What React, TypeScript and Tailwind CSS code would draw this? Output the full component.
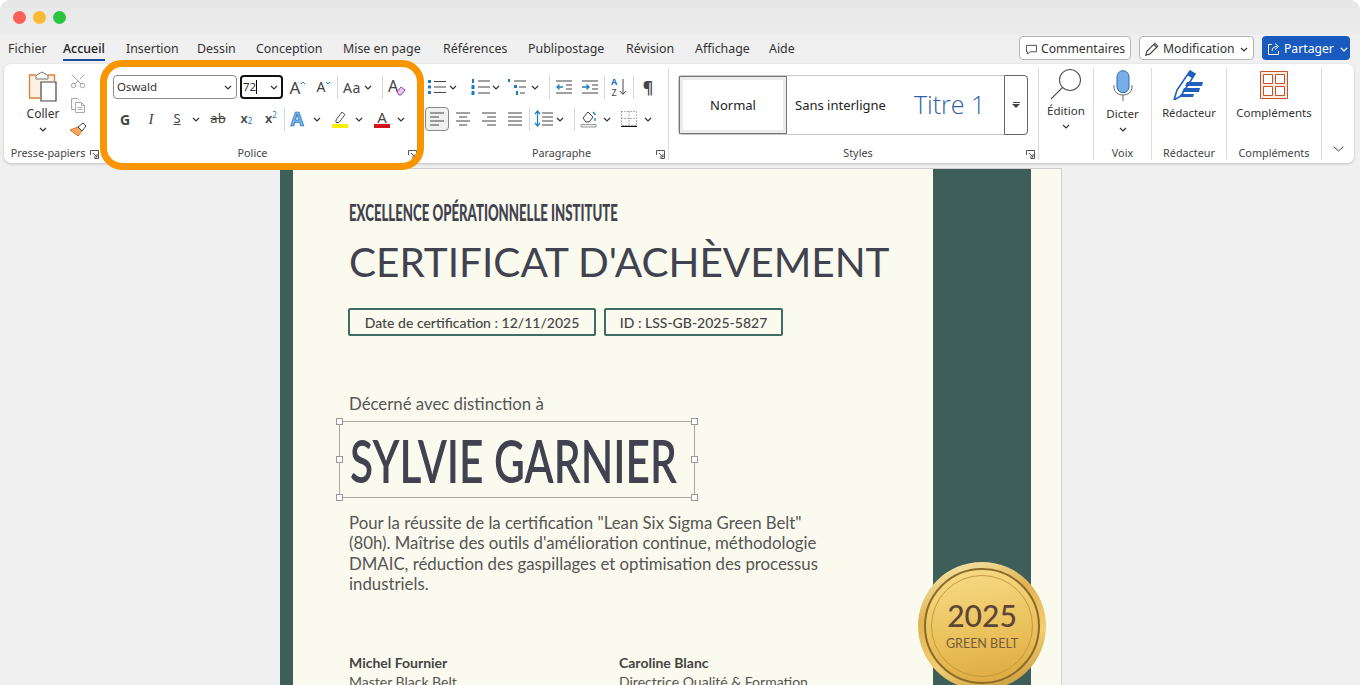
import React from "react";
import { Scissors } from "lucide-react";

const Chev = ({ c = "#333", w = 8 }: { c?: string; w?: number }) => (
  <svg width={w} height={5} viewBox="0 0 8 5" className="shrink-0" fill="none">
    <path d="M1 1l3 3 3-3" stroke={c} strokeWidth="1.2" />
  </svg>
);
const Cell = ({ className = "", children }: { className?: string; children?: React.ReactNode }) => (
  <div className={"flex h-6 shrink-0 items-center justify-center text-[#444] " + className}>{children}</div>
);
const Sep = ({ className = "" }: { className?: string }) => <div className={"h-6 w-px shrink-0 bg-[#d8d8d8] " + className} />;
const Launcher = () => (
  <svg width="9" height="9" viewBox="0 0 9 9" fill="none" className="absolute bottom-[1px] right-[3px]">
    <path d="M.5 5V.5H8.5V8.5H4.5M3 3l4 4M7 4v3H4" stroke="#555" strokeWidth="1" />
  </svg>
);
const Group = ({ label, className = "", labelClass = "", launcher, children }: { label: string; className?: string; labelClass?: string; launcher?: boolean; children?: React.ReactNode }) => (
  <div className={"relative flex h-[92px] shrink-0 flex-col " + className}>
    <div className="min-h-0 flex-1">{children}</div>
    <div className={"text-center text-[10.8px] leading-[14px] text-[#444] " + labelClass}>{label}</div>
    {launcher && <Launcher />}
  </div>
);
const AlignL = () => (
  <svg width="20" height="16" viewBox="0 0 20 16" fill="none" stroke="#444" strokeWidth="1.1"><path d="M3 2h14M3 6h9M3 10h14M3 14h9" /></svg>
);
const AlignC = () => (
  <svg width="20" height="16" viewBox="0 0 20 16" fill="none" stroke="#444" strokeWidth="1.1"><path d="M3 2h14M6 6h8M3 10h14M6 14h8" /></svg>
);
const AlignR = () => (
  <svg width="20" height="16" viewBox="0 0 20 16" fill="none" stroke="#444" strokeWidth="1.1"><path d="M3 2h14M8 6h9M3 10h14M8 14h9" /></svg>
);
const AlignJ = () => (
  <svg width="20" height="16" viewBox="0 0 20 16" fill="none" stroke="#444" strokeWidth="1.1"><path d="M3 2h14M3 6h14M3 10h14M3 14h14" /></svg>
);

const Handle = ({ className }: { className: string }) => (
  <div className={"absolute h-[7px] w-[7px] border border-[#999] bg-white " + className} />
);

const tabs = [
  ["Fichier", "w-[55px]"],
  ["Accueil", "w-[63px]"],
  ["Insertion", "w-[71px]"],
  ["Dessin", "w-[59px]"],
  ["Conception", "w-[87px]"],
  ["Mise en page", "w-[100px]"],
  ["Références", "w-[85px]"],
  ["Publipostage", "w-[98px]"],
  ["Révision", "w-[69px]"],
  ["Affichage", "w-[74px]"],
  ["Aide", "w-[40px]"],
];

export default function App() {
  return (
    <div className="h-[685px] w-[1360px] overflow-hidden bg-white font-['Noto_Sans',sans-serif]">
      <div className="relative flex h-[685px] flex-col overflow-hidden rounded-t-[10px] bg-[#f0f0f0]">
        {/* title bar */}
        <div className="flex h-[35px] shrink-0 items-center gap-[7px] bg-[linear-gradient(#e7e7e7,#ececec)] pb-[1px] pl-[13px]">
          <div className="h-[13px] w-[13px] rounded-full bg-[#fb5f57]" />
          <div className="h-[13px] w-[13px] rounded-full bg-[#fbb934]" />
          <div className="h-[13px] w-[13px] rounded-full bg-[#2bc640]" />
        </div>
        {/* menu row */}
        <div className="flex h-[29px] shrink-0 items-start justify-between pl-2 pr-[10px]">
          <div className="flex text-[12.4px] leading-[28px] text-[#333]">
            {tabs.map(([t, w]) => (
              <div key={t} className={w}>
                <span className={t === "Accueil" ? "inline-block h-[26px] border-b-2 border-[#1e4e9e] font-medium text-[#222]" : ""}>{t}</span>
              </div>
            ))}
          </div>
          <div className="flex items-center gap-2 pt-[1px] text-[12.2px] text-[#333]">
            <div className="flex h-6 w-[112px] items-center gap-1 rounded-[4px] border border-[#b5b5b5] bg-white pl-[6px] pt-[2px]">
              <svg width="11" height="11" viewBox="0 0 12 12" fill="none" stroke="#444"><path d="M.5 1.5h11v7h-7l-3 2.5v-2.5h-1z" /></svg>
              Commentaires
            </div>
            <div className="flex h-6 w-[115px] items-center gap-[3px] rounded-[4px] border border-[#b5b5b5] bg-white pl-[4px] pt-[2px]">
              <svg width="16" height="16" viewBox="0 0 14 14" fill="none" stroke="#444"><path d="M1.5 12.5l1-3.5 7-7 2.5 2.5-7 7zM8.5 3l2.5 2.5" /></svg>
              Modification
              <span className="ml-[2px]"><Chev /></span>
            </div>
            <div className="flex h-6 w-[88px] items-center gap-[3px] rounded-[4px] bg-[#185abd] pl-[5px] pt-[2px] text-white">
              <svg width="14" height="14" viewBox="0 0 14 14" fill="none" stroke="#fff"><path d="M5 2.5H1.5v10h10V9M5 9c0-3 2-4.5 5-4.5M8 1.5l3.5 3L8 7.5" /></svg>
              Partager
              <span className="ml-[3px]"><Chev c="#fff" /></span>
            </div>
          </div>
        </div>
        {/* ribbon */}
        <div className="relative z-10 mx-1 flex h-[99px] w-[1350px] shrink-0 items-start rounded-[7px] bg-white pt-1 shadow-[0_1px_3px_rgba(0,0,0,0.2)]">
          {/* Presse-papiers */}
          <Group label="Presse-papiers" labelClass="pr-[10px]" launcher className="w-[98px]">
            <div className="flex pl-4">
              <div className="flex w-[46px] flex-col items-center pt-[3px]">
                <svg width="30" height="31" viewBox="0 0 30 31" fill="none">
                  <path d="M1.5 4h25v23h-25z" fill="#fdf1e2" stroke="none" />
                  <path d="M8 4.5L14 1l6 3.5V8H8z" fill="#fff" stroke="#777" />
                  <path d="M13 11h15v19H13z" fill="#fff" stroke="#444" strokeWidth="1.2" />
                  <path d="M8 4H1.5v23H13M20 4h6.5v7" stroke="#d9843a" strokeWidth="1.4" />
                </svg>
                <div className="mt-[3px] text-[12px] leading-[18px] text-[#333]">Coller</div>
                <div className="mt-[4px]"><Chev /></div>
              </div>
              <div className="flex w-6 flex-col items-center">
                <div className="flex h-[25px] items-center"><Scissors size={18} className="-rotate-90 text-[#a5a5a5]" strokeWidth={1.3} /></div>
                <div className="flex h-[25px] items-center">
                  <svg width="17" height="17" viewBox="0 0 17 17" fill="none" stroke="#aaa"><path d="M1.5 1.5h6l2 2M1.5 1.5v11H5M5.5 5.5h6l3 3v7h-9zM11.5 5.5v3h3M7.5 10.5h5M7.5 12.5h5" /></svg>
                </div>
                <div className="flex h-[25px] items-center">
                  <svg width="18" height="17" viewBox="0 0 18 17" fill="none">
                    <path d="M9 5l4 4-4 5L1 8z" fill="#f0a860" stroke="#d9762a" />
                    <path d="M9 5l5-4 3 3-4 5z" fill="#fff" stroke="#444" />
                  </svg>
                </div>
              </div>
            </div>
          </Group>
          {/* Police */}
          <Group label="Police" labelClass="pr-7" launcher className="w-[318px] pl-[11px] pt-[7px]">
            <div className="flex items-center">
              <div className="flex h-6 w-[124px] items-center justify-between rounded-[4px] border border-[#8c8c8c] pl-[3px] pr-1 text-[11.5px] text-[#333]">
                Oswald <Chev />
              </div>
              <div className="ml-[3px] flex h-6 w-[43px] items-center justify-between rounded-[4px] border-2 border-[#111] pl-[1px] pr-[3px] text-[11.5px] text-[#333]">
                <span className="border-r border-black pr-0 leading-[14px]">72</span> <Chev />
              </div>
              <Cell className="ml-[3px] w-6">
                <span className="text-[17px] leading-none">A</span>
                <svg width="6" height="4" viewBox="0 0 6 4" className="mb-2" fill="none"><path d="M1 3l2-2 2 2" stroke="#1a7ebc" /></svg>
              </Cell>
              <Cell className="ml-[2px] w-6">
                <span className="text-[14px] leading-none">A</span>
                <svg width="6" height="4" viewBox="0 0 6 4" className="mb-2" fill="none"><path d="M1 1l2 2 2-2" stroke="#1a7ebc" /></svg>
              </Cell>
              <Sep className="ml-px" />
              <Cell className="ml-1 w-5 text-[14px] tracking-[0.5px]">Aa</Cell>
              <Cell className="ml-[2px] w-2"><Chev /></Cell>
              <Sep className="ml-[10px]" />
              <Cell className="ml-[2px] w-6">
                <span className="mb-[2px] text-[16px] leading-none">A</span>
                <svg width="10" height="10" viewBox="0 0 10 10" className="-ml-[2px] mt-2" fill="#e6c8ef" stroke="#a23fc0"><path d="M1 6l4-5 4 3-4 5H3z" /></svg>
              </Cell>
            </div>
            <div className="mt-2 flex items-center">
              <Cell className="-ml-px w-[26px] text-[14px] font-bold">G</Cell>
              <Cell className="w-[26px] font-['Liberation_Serif',serif] text-[15px] italic">I</Cell>
              <Cell className="w-[26px] text-[13px] underline">S</Cell>
              <Cell className="w-[11px]"><Chev /></Cell>
              <Cell className="w-[34px] text-[13px] line-through">ab</Cell>
              <Cell className="w-[23px] text-[13px] font-semibold">x<sub className="text-[8px] font-normal text-[#1a7ebc]">2</sub></Cell>
              <Cell className="w-[26px] text-[13px] font-semibold">x<sup className="text-[8px] font-normal text-[#1a7ebc]">2</sup></Cell>
              <Sep />
              <Cell className="w-6 text-[19px] font-bold text-[#1a78c8] [-webkit-text-stroke:0.6px_#0f5da3]"><span className="text-[#6fb4ee]">A</span></Cell>
              <Cell className="w-4"><Chev /></Cell>
              <Cell className="w-[30px]">
                <svg width="18" height="18" viewBox="0 0 18 18" fill="none">
                  <path d="M5 10l6-8 3 2.5-6 8H5z" stroke="#555" strokeWidth="1" />
                  <path d="M1 14h16v4H1z" fill="#f8f000" />
                </svg>
              </Cell>
              <Cell className="w-2"><Chev /></Cell>
              <Cell className="ml-[3px] w-8">
                <div className="flex flex-col items-center">
                  <span className="text-[15px] leading-[14px]">A</span>
                  <div className="h-[4px] w-[16px] bg-[#d3111a]" />
                </div>
              </Cell>
              <Cell className="w-[5px]"><Chev /></Cell>
            </div>
          </Group>
          {/* Paragraphe */}
          <Group label="Paragraphe" labelClass="pl-[30px]" launcher className="w-[249px] border-r border-[#dcdcdc] pl-[5px] pt-[7px]">
            <div className="flex items-center">
              <Cell className="w-6">
                <svg width="22" height="16" viewBox="0 0 22 16" fill="none" stroke="#444" strokeWidth="1.1"><path d="M8 2.5h12M8 8h12M8 13.5h12" /><path d="M2 1h3v3H2zM2 6.5h3v3H2zM2 12h3v3H2z" fill="#1a7ebc" stroke="none" /></svg>
              </Cell>
              <Cell className="w-2"><Chev /></Cell>
              <Cell className="ml-[11px] w-6">
                <svg width="22" height="18" viewBox="0 0 22 18" fill="none" stroke="#444" strokeWidth="1.1"><path d="M9 3h12M9 9h12M9 15h12" /><path d="M3 1h2v4H3zM2.5 7h3v4h-3zM2.5 13h3v4h-3z" fill="#1a7ebc" stroke="none" /></svg>
              </Cell>
              <Cell className="w-2"><Chev /></Cell>
              <Cell className="ml-[5px] w-6">
                <svg width="22" height="18" viewBox="0 0 22 18" fill="none" stroke="#444" strokeWidth="1.1"><path d="M8 3h12M13 9h7M14 15h5" /><path d="M2 1h2v3H2zM8 7h3v3H8zM10 13h2v4h-2z" fill="#1a7ebc" stroke="none" /></svg>
              </Cell>
              <Cell className="ml-[2px] w-2"><Chev /></Cell>
              <Sep className="ml-[10px]" />
              <Cell className="ml-[2px] w-6">
                <svg width="18" height="14" viewBox="0 0 18 14" fill="none" stroke="#444" strokeWidth="1.1"><path d="M1 1h16M11 5h6M11 9h6M1 13h16" /><path d="M8 7H2M4.5 4.5L2 7l2.5 2.5" stroke="#1a7ebc" strokeWidth="1.3" /></svg>
              </Cell>
              <Cell className="ml-[2px] w-6">
                <svg width="18" height="14" viewBox="0 0 18 14" fill="none" stroke="#444" strokeWidth="1.1"><path d="M1 1h16M11 5h6M11 9h6M1 13h16" /><path d="M1 7h7M5.5 4.5L8 7l-2.5 2.5" stroke="#1a7ebc" strokeWidth="1.3" /></svg>
              </Cell>
              <Sep className="ml-[2px]" />
              <Cell className="ml-[2px] w-6">
                <div className="flex h-[20px] flex-col items-center justify-between text-[9px] font-bold leading-[9px]"><span className="text-[#1a7ebc]">A</span><span className="font-normal">Z</span></div>
                <svg width="8" height="17" viewBox="0 0 8 17" fill="none" stroke="#444" className="ml-[2px]"><path d="M4 0v15M1 12l3 3.5L7 12" /></svg>
              </Cell>
              <Sep className="ml-[2px]" />
              <Cell className="ml-[2px] w-6 text-[16px] font-bold">¶</Cell>
            </div>
            <div className="mt-2 flex items-center">
              <Cell className="w-6 rounded-[4px] border border-[#8a8a8a] bg-[#f0f0f0]"><AlignL /></Cell>
              <Cell className="ml-[2px] w-6"><AlignC /></Cell>
              <Cell className="ml-[2px] w-6"><AlignR /></Cell>
              <Cell className="ml-[2px] w-6"><AlignJ /></Cell>
              <Sep className="ml-[2px]" />
              <Cell className="ml-[2px] w-6">
                <svg width="20" height="18" viewBox="0 0 20 18" fill="none" stroke="#444" strokeWidth="1.1"><path d="M8 3h11M8 7h11M8 11h11M8 15h11" /><path d="M3.5 1v15M1 4l2.5-3L6 4M1 13l2.5 3L6 13" stroke="#1a7ebc" strokeWidth="1.2" /></svg>
              </Cell>
              <Cell className="w-2"><Chev /></Cell>
              <Sep className="ml-[10px]" />
              <Cell className="ml-[2px] w-6">
                <svg width="18" height="18" viewBox="0 0 18 18" fill="none"><path d="M3 8l5-6 5 5-4 5H6z" stroke="#444" /><path d="M13 2l2.5 3M15 8v3" stroke="#1a7ebc" strokeWidth="1.3" /><path d="M1 14.5h15V17H1z" fill="#f0f0f0" stroke="#999" /></svg>
              </Cell>
              <Cell className="ml-[2px] w-2"><Chev /></Cell>
              <Cell className="ml-[6px] w-6">
                <svg width="16" height="16" viewBox="0 0 16 16" fill="none"><path d="M.5.5h15v14H.5zM8 .5v14M.5 7.5h15" stroke="#666" strokeDasharray="1 2" /><path d="M0 15.5h16" stroke="#111" strokeWidth="1.2" /></svg>
              </Cell>
              <Cell className="ml-[3px] w-2"><Chev /></Cell>
            </div>
          </Group>
          {/* Styles */}
          <Group label="Styles" launcher className="w-[370px] border-r border-[#dcdcdc] pl-[9px] pt-[7px]">
            <div className="flex h-[60px] w-[350px] rounded-[4px] border border-[#c8c8c8]">
              <div className="flex h-[58px] w-[108px] shrink-0 items-center justify-center border border-[#777] bg-white pt-[1px] text-[13px] text-[#222] shadow-[inset_0_0_0_3px_#ececec]">Normal</div>
              <div className="flex w-[127px] shrink-0 items-center pl-2 pt-[1px] text-[13px] text-[#222]">Sans interligne</div>
              <div className="flex flex-1 items-center font-['Open_Sans',sans-serif] text-[25px] font-light text-[#2f5fa8]">Titre 1</div>
              <div className="flex h-[60px] w-6 -translate-y-px translate-x-px flex-col items-center justify-center rounded-r-[4px] border border-[#666] bg-white">
                <div className="h-px w-[7px] bg-[#444]" />
                <svg width="8" height="5" viewBox="0 0 8 5" className="mt-px"><path d="M0 0h8L4 4z" fill="#444" /></svg>
              </div>
            </div>
          </Group>
          {/* Édition */}
          <Group label="" className="w-[55px] border-r border-[#dcdcdc]">
            <div className="flex flex-col items-center pt-[1px]">
              <svg width="34" height="31" viewBox="0 0 34 31" fill="none" stroke="#555" strokeWidth="1.1"><circle cx="21" cy="11" r="10.5" fill="#fff" /><path d="M13.5 18.5L2 30" /></svg>
              <div className="mt-[2px] text-[11.6px] leading-[18px] text-[#333]">Édition</div>
              <div className="mt-[4px]"><Chev /></div>
            </div>
          </Group>
          {/* Voix */}
          <Group label="Voix" className="w-[58px] border-r border-[#dcdcdc]">
            <div className="flex flex-col items-center pt-[2px]">
              <svg width="20" height="31" viewBox="0 0 20 31" fill="none">
                <rect x="4" y=".7" width="12" height="22" rx="6" fill="#77aee5" stroke="#2b6cb5" />
                <path d="M1 15v2c0 5 4 8 9 8s9-3 9-8v-2M10 25v6" stroke="#666" />
              </svg>
              <div className="mt-[4px] text-[11.6px] leading-[18px] text-[#333]">Dicter</div>
              <div className="mt-[4px]"><Chev /></div>
            </div>
          </Group>
          {/* Rédacteur */}
          <Group label="Rédacteur" className="w-[75px] border-r border-[#dcdcdc]">
            <div className="flex flex-col items-center pt-[2px]">
              <svg width="32" height="30" viewBox="0 0 32 30" fill="none">
                <path d="M1 30L4 20 17 1l5 3L8 26z" fill="#fff" stroke="#1f5fbd" strokeWidth="1.6" />
                <path d="M14 12h16l-1 4H12zM11 18h16l-1 4H9zM8 24h13l-1 3H6z" fill="#1f5fbd" />
                <path d="M17 1l5 3-3 4-5-3z" fill="#1f5fbd" />
              </svg>
              <div className="mt-[4px] text-[11.2px] leading-[18px] text-[#333]">Rédacteur</div>
            </div>
          </Group>
          {/* Compléments */}
          <Group label="Compléments" className="w-[95px] border-r border-[#dcdcdc]">
            <div className="flex flex-col items-center pt-[3px]">
              <svg width="28" height="28" viewBox="0 0 28 28" fill="none">
                <path d="M.5.5h27v27H.5z" fill="#fdeee2" stroke="#c8502a" />
                <path d="M3.5 3.5h9v9h-9zM15.5 3.5h9v9h-9zM3.5 15.5h9v9h-9zM15.5 15.5h9v9h-9z" fill="#fff" stroke="#c8502a" />
              </svg>
              <div className="mt-[5px] text-[11.5px] leading-[18px] text-[#333]">Compléments</div>
            </div>
          </Group>
          <div className="flex h-[90px] flex-1 items-end justify-center pb-[6px]">
            <svg width="11" height="6" viewBox="0 0 11 6" fill="none"><path d="M.7.7l4.8 4.3L10.3.7" stroke="#444" /></svg>
          </div>
        </div>
        {/* document area */}
        <div className="flex min-h-0 flex-1 pl-[280px] pt-[5px]">
          <div className="relative flex h-[600px] w-[782px] shrink-0 border-y border-r border-[#cfcfcf] bg-[#fbfaee]">
            <div className="w-[13px] shrink-0 bg-[#3d5e59]" />
            <div className="w-[640px] shrink-0 pl-[56px] font-['Lato',sans-serif] text-[#444653]">
              <div className="mt-[33px] origin-left scale-x-[0.6] whitespace-nowrap text-[22px] font-black leading-[22px] text-[#40424f]">EXCELLENCE OPÉRATIONNELLE INSTITUTE</div>
              <div className="mt-[11px] whitespace-nowrap text-[40.5px] leading-[54px] text-[#40424f]">CERTIFICAT D'ACHÈVEMENT</div>
              <div className="mt-[19px] flex gap-2 text-[14px] font-medium text-[#454545]">
                <div className="-ml-px flex h-[28px] w-[248px] items-center justify-center rounded-[2px] border-2 border-[#3f6b60]">Date de certification : 12/11/2025</div>
                <div className="flex h-[28px] w-[179px] items-center justify-center rounded-[2px] border-2 border-[#3f6b60]">ID : LSS-GB-2025-5827</div>
              </div>
              <div className="mt-[57px] text-[16.8px] leading-[22px] text-[#555]">Décerné avec distinction à</div>
              <div className="relative -ml-[10px] mt-[6px] flex h-[77px] w-[356px] items-center border border-[#a8a8a0] pl-[10px]">
                <div className="origin-left scale-x-[0.707] whitespace-nowrap text-[60px] font-semibold leading-none text-[#40424f]">SYLVIE GARNIER</div>
                <Handle className="-left-1 -top-1" />
                <Handle className="-right-1 -top-1" />
                <Handle className="-left-1 top-[34px]" />
                <Handle className="-right-1 top-[34px]" />
                <Handle className="-bottom-1 -left-1" />
                <Handle className="-bottom-1 -right-1" />
              </div>
              <div className="mt-[15px] w-[480px] text-[16.8px] leading-[20.4px] text-[#555]">
                Pour la réussite de la certification "Lean Six Sigma Green Belt" (80h). Maîtrise des outils d'amélioration continue, méthodologie DMAIC, réduction des gaspillages et optimisation des processus industriels.
              </div>
              <div className="mt-[58px] flex text-[14px] leading-[19px]">
                <div className="w-[270px]">
                  <div className="font-bold text-[#444]">Michel Fournier</div>
                  <div className="text-[#555]">Master Black Belt</div>
                </div>
                <div>
                  <div className="font-bold text-[#444]">Caroline Blanc</div>
                  <div className="text-[#555]">Directrice Qualité &amp; Formation</div>
                </div>
              </div>
            </div>
            <div className="w-[98px] shrink-0 bg-[#3d5e59]" />
            <div className="absolute left-[638px] top-[393px] flex h-[128px] w-[128px] items-center justify-center rounded-full bg-[linear-gradient(160deg,#fbf0c0,#e0b450_35%,#f2cf72_65%,#c08e2c)] pb-[1px] font-['Lato',sans-serif]">
              <div className="flex h-[116px] w-[116px] items-center justify-center rounded-full border-2 border-[#8b6a2a] bg-[linear-gradient(170deg,#f7dc8a,#ebc25c_55%,#dca83e)]">
                <div className="flex h-[102px] w-[102px] flex-col items-center justify-center rounded-full border border-[#c49a3e] pb-[1px]">
                  <div className="text-[30px] font-medium leading-[34px] text-[#5c4436]">2025</div>
                  <div className="mt-[4px] text-[12.5px] leading-[16px] text-[#76593f]">GREEN BELT</div>
                </div>
              </div>
            </div>
          </div>
        </div>
        {/* orange highlight */}
        <div className="pointer-events-none absolute left-[100px] top-[60px] z-20 h-[110px] w-[324px] rounded-[22px] border-[7px] border-[#f89500]" />
      </div>
    </div>
  );
}
